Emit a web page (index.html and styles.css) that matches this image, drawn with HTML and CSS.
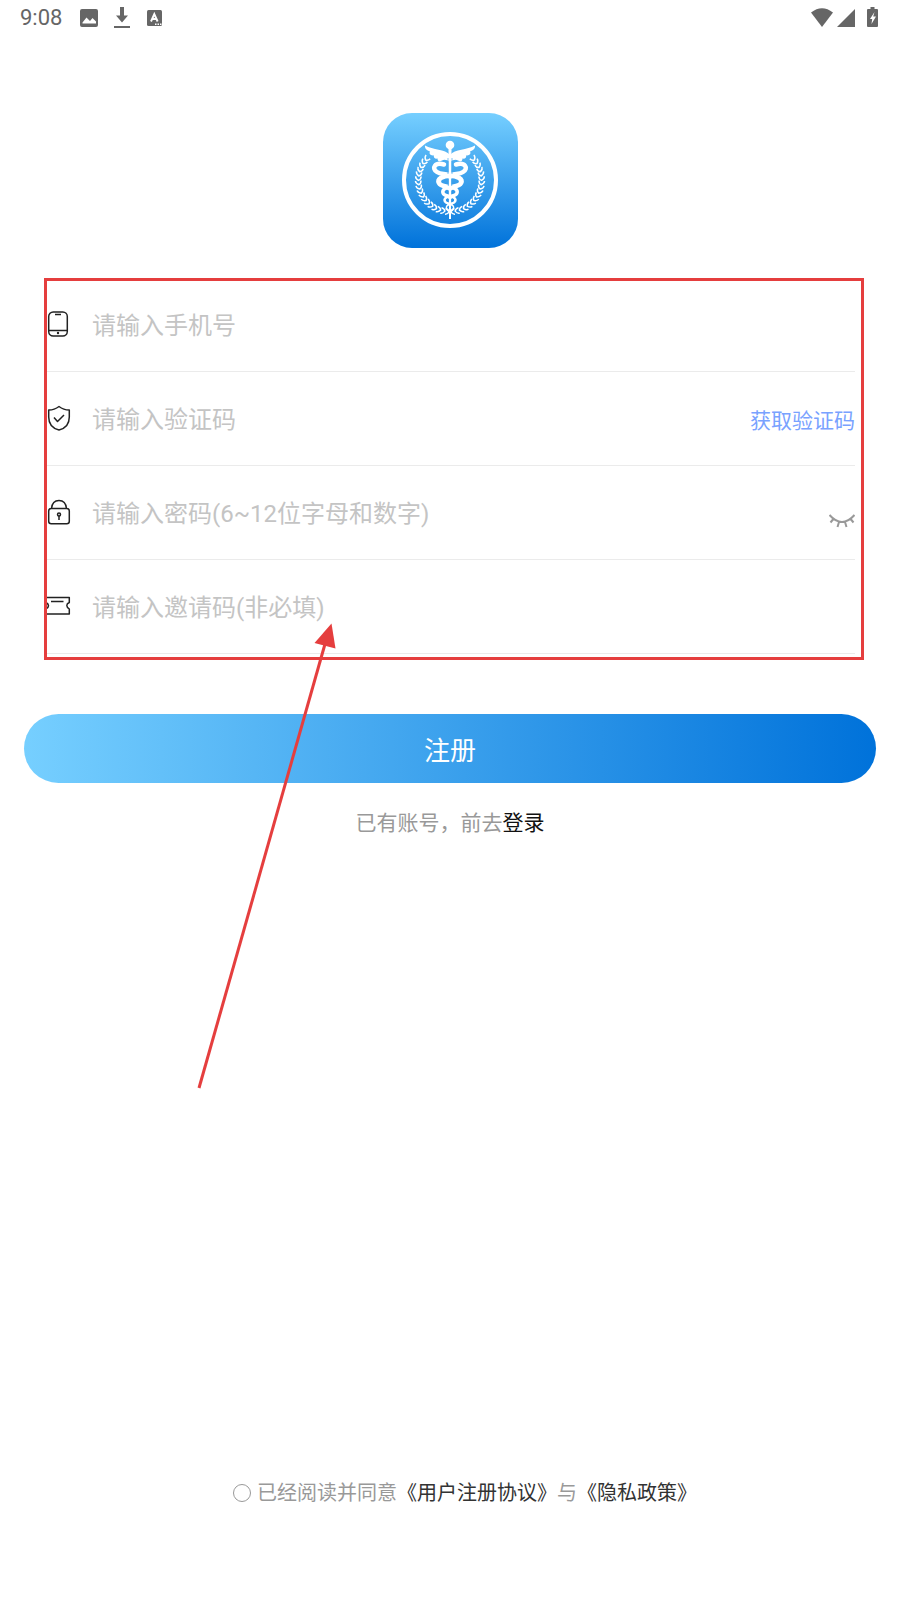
FILE: index.html
```html
<!DOCTYPE html>
<html lang="zh-CN">
<head>
<meta charset="utf-8">
<meta name="viewport" content="width=device-width, initial-scale=1">
<title>注册</title>
<link rel="stylesheet" href="styles.css">
</head>
<body>
<div class="page">
  <header class="status">
    <span class="time">9:08</span>
    <svg class="status-picture" width="18" height="18" viewBox="0 0 18 18" aria-hidden="true"><path fill-rule="evenodd" d="M2 0h14q2 0 2 2v14q0 2-2 2H2q-2 0-2-2V2q0-2 2-2zM2.500 14.500h13.500v-2l-3.500-3.500-2.500 3-3.500-3.500-4 5z"/></svg>
    <svg class="status-download" width="16" height="22" viewBox="0 0 16 22" aria-hidden="true"><path d="M6 0h4v8.500h4L8 15.500 2 8.500h4zM0 19h16v2H0z"/></svg>
    <svg class="status-letter" width="16" height="16" viewBox="0 0 16 16" aria-hidden="true"><rect width="15" height="16" rx="1.500"/><path d="M4 11.500 7.300 4 10.600 11.500M5.300 9h4" fill="none" stroke="#fff" stroke-width="1.900"/><path d="M8 13.500h1.500v1.500H8zM10.500 13.500H12v1.500h-1.500zM13 13.500h1.500v1.500H13z" fill="#fff"/></svg>
    <svg class="status-wifi" width="22" height="20" viewBox="0 0 22 20" aria-hidden="true"><path d="M0 4.500Q11-4 22 4.500L11 19z"/></svg>
    <svg class="status-signal" width="18" height="18" viewBox="0 0 18 18" aria-hidden="true"><path d="M18 0v18H0z"/></svg>
    <svg class="status-battery" width="11" height="20" viewBox="0 0 11 20" aria-hidden="true"><path d="M3.500 0h4v2H10q1 0 1 1v16q0 1-1 1H1q-1 0-1-1V3q0-1 1-1h2.500z"/><path d="M7.500 5 3 12h2.200L4.500 17 9 9.500H6.200z" fill="#fff"/></svg>
  </header>

  <main class="main">
    <svg class="logo" viewBox="0 0 135 135" role="img" aria-label="logo">
      <defs>
        <linearGradient id="tile" x1="0" y1="0" x2="0" y2="1"><stop offset="0" stop-color="#76cfff"/><stop offset="1" stop-color="#0072da"/></linearGradient>
        <path id="leaf" d="M65 96Q68 96 69 98.500Q67.500 101.500 65 101.500" fill="none" stroke="#fff" stroke-width="1.500"/>
        <g id="branch">
          <use href="#leaf" transform="rotate(5 67 67)"/><use href="#leaf" transform="rotate(13 67 67)"/><use href="#leaf" transform="rotate(21 67 67)"/><use href="#leaf" transform="rotate(29 67 67)"/><use href="#leaf" transform="rotate(37 67 67)"/><use href="#leaf" transform="rotate(45 67 67)"/><use href="#leaf" transform="rotate(53 67 67)"/><use href="#leaf" transform="rotate(61 67 67)"/><use href="#leaf" transform="rotate(69 67 67)"/><use href="#leaf" transform="rotate(77 67 67)"/><use href="#leaf" transform="rotate(85 67 67)"/><use href="#leaf" transform="rotate(93 67 67)"/><use href="#leaf" transform="rotate(101 67 67)"/><use href="#leaf" transform="rotate(109 67 67)"/><use href="#leaf" transform="rotate(117 67 67)"/><use href="#leaf" transform="rotate(125 67 67)"/><use href="#leaf" transform="rotate(133 67 67)"/>
        </g>
        <g id="half">
          <path fill="#fff" d="M67 42C62 36 50 37 42 32.500C41.500 35.500 44 37.500 47 38.500C45.500 41 48 42.500 51 42.500C50 45 52.500 46 54.500 45.500C54.500 48.500 57 49 59 47.500C61 46 64 46.500 67 49z"/>
          <g fill="none" stroke="#fff" stroke-linecap="round">
            <path stroke-width="4.500" d="M61 51.500C52 49 48 55 54 59C58 62 63 60 68 63"/>
            <path stroke-width="4.800" d="M67 62.500C60 62.500 54 66 56 70C58 74 64 73 68 75"/>
            <path stroke-width="3.500" d="M67 74.500C62 74.500 59 77 60 80C61 83 64 82.500 68 84"/>
            <path stroke-width="2.500" d="M67 83C63 84 60.500 86 62 88.500C63 90.500 65 90 68 91.500"/>
            <path stroke-width="1.500" d="M67 91C63.500 92 62.500 94.500 64 96.500C65 98 66 98 67.500 99.500"/>
          </g>
        </g>
      </defs>
      <rect width="135" height="135" rx="29" fill="url(#tile)"/>
      <circle cx="67" cy="67" r="46" fill="none" stroke="#fff" stroke-width="4"/>
      <use href="#branch"/>
      <use href="#branch" transform="matrix(-1 0 0 1 134 0)"/>
      <use href="#half"/>
      <use href="#half" transform="matrix(-1 0 0 1 134 0)"/>
      <circle cx="67" cy="32" r="4.300" fill="#fff"/>
      <path d="M65.500 34h3L68 106h-2z" fill="#fff"/>
      <path d="M65 45v16M65.300 66v7M69 45v16M68.700 66v7" stroke="#47a9ee" stroke-width=".7"/>
    </svg>

    <form class="form" id="register">
      <div class="row">
        <label class="icon" for="phone" aria-label="手机号"><svg width="26" height="26" viewBox="0 0 26 26"><rect x="3.700" y="1" width="18.600" height="24" rx="4.500"/><path d="M10 3.500h6M4 19.500h18"/><circle class="dot" cx="13" cy="22" r="1.200"/></svg></label>
        <input class="field" id="phone" type="tel" placeholder="请输入手机号">
      </div>
      <div class="row">
        <label class="icon" for="code" aria-label="验证码"><svg width="26" height="26" viewBox="0 0 26 26"><path d="M14 1.500Q18.500 5 24.300 5v7C24.300 19 20 23.500 14 25 8 23.500 3.700 19 3.700 12V5Q9.500 5 14 1.500zM9 12.500l3.500 4 6.500-6.500"/></svg></label>
        <input class="field" id="code" type="text" placeholder="请输入验证码">
        <button class="send" type="button">获取验证码</button>
      </div>
      <div class="row">
        <label class="icon" for="password" aria-label="密码"><svg width="26" height="26" viewBox="0 0 26 26"><rect x="3.700" y="9.500" width="20.600" height="15.300" rx="2.500"/><path d="M6.500 9.500C7 4.500 10 1.500 14 1.500s7 3 7.500 8M14 17v4"/><circle cx="14" cy="15.500" r="1.500"/></svg></label>
        <input class="field" id="password" type="password" placeholder="请输入密码(6~12位字母和数字)">
        <button class="reveal" type="button" aria-label="显示密码"><svg width="26" height="14" viewBox="0 0 26 14"><path d="M.500 1q12.500 14 25 0M4.800 4.500 1.500 8.500M10 8l-1.500 5M16 8l1.500 5M21.200 4.500l3.300 4"/></svg></button>
      </div>
      <div class="row">
        <label class="icon" for="invite" aria-label="邀请码"><svg width="26" height="26" viewBox="0 0 26 26"><path d="M1 4.500h23.300v5q-5 2.500 0 6.500v5H1v-5q5-3.500 0-6.500zM6 8.500h12.500"/></svg></label>
        <input class="field" id="invite" type="text" placeholder="请输入邀请码(非必填)">
      </div>
      <svg class="marker" width="820" height="812" viewBox="0 0 820 812" aria-hidden="true"><rect x="1.500" y="1.500" width="817" height="379"/><path d="M155 810 281 366"/><path class="head" d="M287.500 345.500 270.500 365 291.500 370.500z"/></svg>
    </form>

    <button class="submit" type="submit" form="register">注册</button>
    <p class="login">已有账号，前去<a href="#login">登录</a></p>
  </main>

  <footer class="agreement">
    <input class="agree" id="agree" type="checkbox">
    <p class="terms"><label for="agree">已经阅读并同意</label><a href="#terms">《用户注册协议》</a>与<a href="#privacy">《隐私政策》</a></p>
  </footer>
</div>
</body>
</html>
```
FILE: styles.css
```css
* { box-sizing: border-box; }
body {
  margin: 0;
  background: #fff;
  font-family: Roboto, "Noto Sans CJK SC", sans-serif;
}
button, input { font: inherit; border: 0; padding: 0; background: none; }
button { cursor: pointer; }
a { text-decoration: none; }
p { margin: 0; }
svg { display: block; }

.page { display: flex; flex-direction: column; min-height: 100vh; }

.status {
  display: flex;
  align-items: center;
  height: 36px;
  padding: 0 22px 0 20px;
  color: #666;
  fill: #666;
}
.time { font-size: 22px; line-height: 36px; }
.status-picture { margin-left: 18px; }
.status-download { margin-left: 16px; }
.status-letter { margin-left: 17px; }
.status-wifi { margin-left: auto; }
.status-signal { margin-left: 4px; }
.status-battery { margin-left: 12px; margin-bottom: 2px; }

.main { display: flex; flex-direction: column; flex: 1; padding: 77px 24px 0; }
.logo { width: 135px; height: 135px; align-self: center; }

.form { position: relative; margin: 30px 21px 0; }
.row {
  display: flex;
  align-items: center;
  height: 94px;
  border-bottom: 1px solid #ebebeb;
}
.icon { padding-bottom: 2px; }
.icon svg { fill: none; stroke: #222; stroke-width: 1.5; stroke-linejoin: round; }
.icon .dot { fill: #222; stroke: none; }
.field {
  flex: 1;
  min-width: 0;
  height: 48px;
  margin-left: 21px;
  padding-top: 2px;
  font-size: 24px;
  color: #333;
  outline: 0;
}
.field::placeholder { color: #c4c4c4; opacity: 1; }
.send { font-size: 21px; color: #79a2ff; }
.reveal { padding-top: 17px; }
.reveal svg { fill: none; stroke: #999; stroke-width: 2; }

.marker {
  position: absolute;
  top: 0;
  left: -1px;
  overflow: visible;
  pointer-events: none;
  fill: none;
  stroke: #e53e3e;
  stroke-width: 3;
}
.marker .head { fill: #e53e3e; stroke: none; }

.submit {
  height: 69px;
  margin-top: 60px;
  border-radius: 35px;
  background: linear-gradient(90deg, #76cfff, #0072da);
  color: #fff;
  font-size: 26px;
}
.login {
  margin-top: 25px;
  text-align: center;
  font-size: 21px;
  line-height: 30px;
  color: #999;
}
.login a { color: #111; }

.agreement {
  display: flex;
  align-items: center;
  justify-content: center;
  padding: 0 0 92px 30px;
  font-size: 20px;
  line-height: 30px;
  color: #999;
}
.agree {
  appearance: none;
  width: 18px;
  height: 18px;
  margin: 0 6px 0 0;
  border: 1px solid #999;
  border-radius: 50%;
}
.agree:checked { background: #0072da; }
.terms a { color: #333; }
```
